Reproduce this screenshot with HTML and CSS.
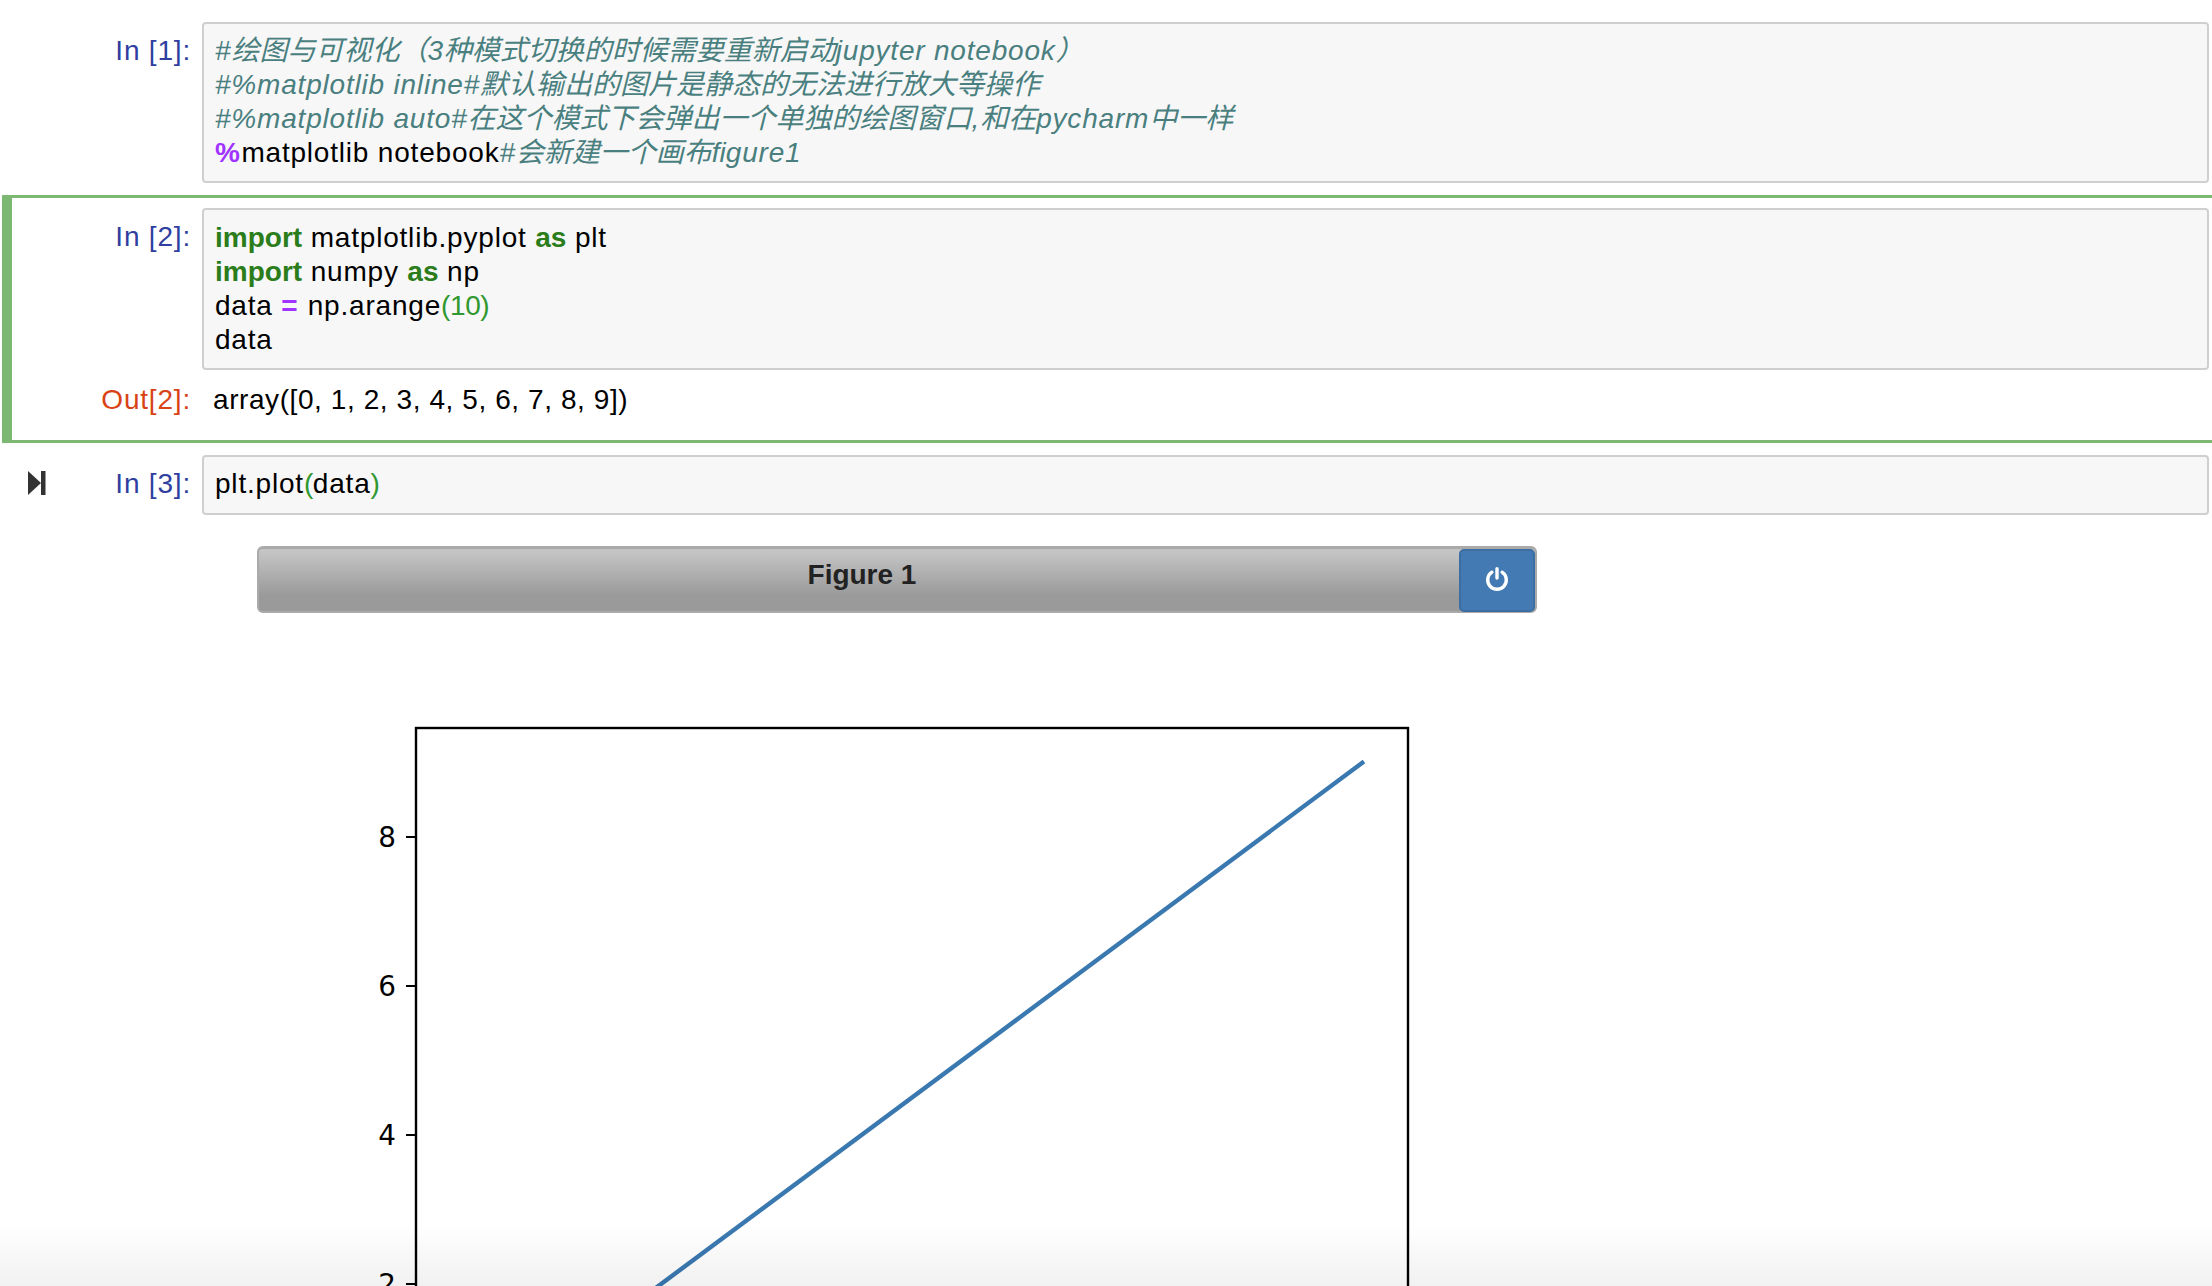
FILE: index.html
```html
<!DOCTYPE html>
<html lang="zh">
<head>
<meta charset="utf-8">
<title>Notebook</title>
<link rel="stylesheet" href="styles.css">
</head>
<body>
<main class="notebook">
  <section class="cell cell-first">
    <div class="row">
      <div class="prompt in">In [1]:</div>
      <pre class="code box"><span class="c">#<span class="z">绘图与可视化（</span>3<span class="z">种模式切换的时候需要重新启动</span>jupyter notebook<span class="z">）</span></span>
<span class="c">#%matplotlib inline#<span class="z">默认输出的图片是静态的无法进行放大等操作</span></span>
<span class="c">#%matplotlib auto#<span class="z">在这个模式下会弹出一个单独的绘图窗口</span>,<span class="z">和在</span>pycharm<span class="z">中一样</span></span>
<span class="o">%</span>matplotlib notebook<span class="c">#<span class="z">会新建一个画布fi</span>gure1</span></pre>
    </div>
  </section>
  <section class="cell selected">
    <div class="row">
      <div class="prompt in">In [2]:</div>
      <pre class="code box tall"><span class="k">import</span> matplotlib.pyplot <span class="k">as</span> plt
<span class="k">import</span> numpy <span class="k">as</span> np
data <span class="o">=</span> np.arange<span class="n">(10)</span>
data</pre>
    </div>
    <div class="row out-row">
      <div class="prompt out">Out[2]:</div>
      <pre class="code output">array([0, 1, 2, 3, 4, 5, 6, 7, 8, 9])</pre>
    </div>
  </section>
  <section class="cell cell-last">
    <div class="row">
      <div class="prompt in">
        <svg class="run-icon" viewBox="0 0 18 24" aria-hidden="true"><path d="M0 0L13 12L0 24Z"/><rect x="13" y="0" width="4.5" height="24"/></svg>
        In [3]:
      </div>
      <pre class="code box one">plt.plot<span class="n">(</span>data<span class="n">)</span></pre>
    </div>
    <div class="figure">
      <div class="fig-header">
        <div class="fig-title">Figure 1</div>
        <button class="fig-close" type="button" aria-label="Stop">
          <svg viewBox="0 0 28 28" width="28" height="28" aria-hidden="true"><path class="power" d="M8.9 5.2A9.3 9.3 0 1 0 19.1 5.2"/><path class="power" d="M14 1.8V11"/></svg>
        </button>
      </div>
      <svg class="canvas" width="1280" height="960" viewBox="0 0 1280 960">
        <polyline class="plot-line" points="205,819 1107,148.5"/>
        <rect class="spine" x="159" y="115" width="992" height="737"/>
        <g class="tick">
          <path d="M149 224H159M149 373H159M149 522H159M149 671H159"/>
        </g>
        <g class="tick-label">
          <text x="139" y="234">8</text>
          <text x="139" y="383">6</text>
          <text x="139" y="532">4</text>
          <text x="139" y="681">2</text>
        </g>
      </svg>
    </div>
  </section>
</main>
<div class="bottom-fade"></div>
</body>
</html>
```
FILE: styles.css
```css
html, body {
  margin: 0;
  padding: 0;
  height: 1286px;
  overflow: hidden;
  background: #fff;
}
body {
  position: relative;
  font-family: "Liberation Sans", "Noto Sans CJK SC", sans-serif;
  font-size: 28px;
  line-height: 34px;
  letter-spacing: 0.8px;
  color: #000;
}
.notebook {
  padding: 22px 3px 0 2px;
}
.cell { margin-right: -3px; }
.cell-first { padding-right: 3px; margin-bottom: 12px; }
.row {
  display: flex;
  align-items: flex-start;
}
.selected {
  border-top: 3px solid #7cb872;
  border-bottom: 3px solid #7cb872;
  border-left: 10px solid #7cb872;
  padding: 10px 3px 23.7px 0;
  margin-bottom: 12px;
}
.selected .prompt { width: 190px; }
.cell-first .prompt, .cell-last .prompt { width: 200px; }
.cell-last { padding-right: 3px; }
.prompt {
  box-sizing: border-box;
  flex: none;
  padding: 12px 11px 0 0;
  text-align: right;
  position: relative;
}
.in { color: #303f9f; }
.out { color: #d84315; }
.code {
  margin: 0;
  font: inherit;
  letter-spacing: inherit;
  white-space: pre;
  flex: 1;
  min-width: 0;
}
.box {
  box-sizing: border-box;
  background: #f7f7f7;
  border: 2px solid #cfcfcf;
  border-radius: 4px;
  padding: 10px 12px 10px 11px;
  height: 160.5px;
}
.box.tall { height: 162px; padding-top: 11px; }
.box.one { height: 59.5px; padding: 10px 12px 10.5px 11px; }
.output { padding: 0 0 0 11px; letter-spacing: 0.58px; }
.out-row { margin-top: 1px; }
.out-row .prompt { padding-top: 12px; }
.out-row .output { padding-top: 12px; }
.c { color: #4a7f7f; font-style: italic; }
.z { letter-spacing: 0; }
.k { color: #2a7d1a; font-weight: bold; letter-spacing: 0; }
.o { color: #a033ff; font-weight: bold; letter-spacing: 1.5px; }
.n { color: #2f982f; letter-spacing: -0.4px; }

.run-icon {
  position: absolute;
  left: 26px;
  top: 16px;
  width: 18px;
  height: 24px;
  fill: #333;
}

.figure {
  margin: 31.5px 0 0 255px;
  width: 1280px;
}
.fig-header {
  box-sizing: border-box;
  display: flex;
  height: 67px;
  border: 2px solid #aaa;
  border-top-width: 3px;
  border-radius: 6px;
  background: linear-gradient(#c4c4c4 5%, #9a9a9a 75%);
}
.fig-title {
  flex: 1;
  padding: 9px 0 0 6px;
  text-align: center;
  font-weight: bold;
  letter-spacing: 0;
  color: #222;
}
.fig-close {
  box-sizing: border-box;
  width: 76px;
  height: 63px;
  margin: 0;
  padding: 0;
  display: flex;
  align-items: center;
  justify-content: center;
  background: #447ab4;
  border: 2px solid #3d6ea3;
  border-radius: 5px;
}
.power {
  fill: none;
  stroke: #fff;
  stroke-width: 3.4;
  stroke-linecap: round;
}
.canvas { display: block; }
.plot-line { fill: none; stroke: #3a78b0; stroke-width: 4.4; }
.spine { fill: none; stroke: #000; stroke-width: 2.4; }
.tick path { stroke: #000; stroke-width: 2.2; fill: none; }
.tick-label text {
  font-family: "DejaVu Sans", sans-serif;
  font-size: 27.8px;
  letter-spacing: 0;
  text-anchor: end;
  fill: #000;
}

.bottom-fade {
  position: absolute;
  left: 0;
  right: 0;
  bottom: 0;
  height: 62px;
  background: linear-gradient(rgba(0, 0, 0, 0), rgba(0, 0, 0, 0.055));
  pointer-events: none;
}
```
